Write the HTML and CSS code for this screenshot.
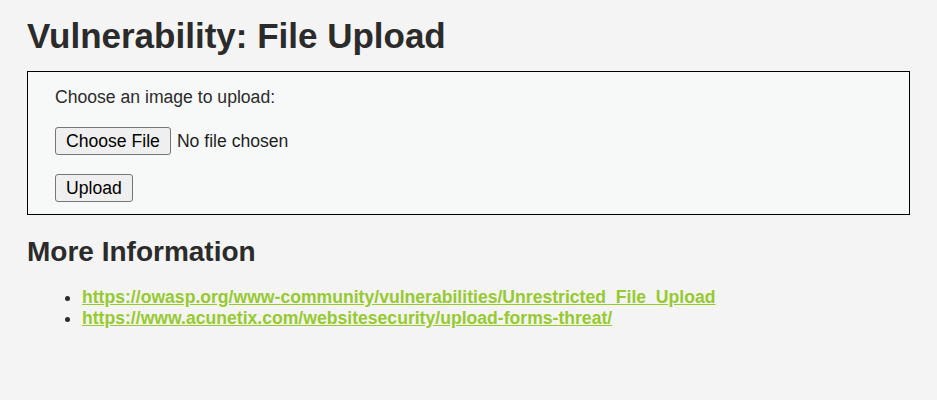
FILE: index.html
```html
<!DOCTYPE html>
<html lang="en">

<head>
    <meta charset="UTF-8">
    <meta name="viewport" content="width=device-width, initial-scale=1.0">
    <title>Vulnerability: File Upload</title>
    <link rel="stylesheet" href="styles.css">
</head>

<body>
    <div class="body-padded">
        <h1>Vulnerability: File Upload</h1>

        <div class="vulnerable-code-area">
            <form class="upload-form" enctype="multipart/form-data" method="POST" onsubmit="return false">
                <input type="hidden" name="MAX_FILE_SIZE" value="100000">
                <div class="form-row">Choose an image to upload:</div>
                <div class="form-row file-row">
                    <label class="btn" for="uploaded">Choose File</label>
                    <input class="file-input" id="uploaded" name="uploaded" type="file">
                    <span class="file-name">No file chosen</span>
                </div>
                <div class="form-row">
                    <button type="submit" class="btn" name="Upload">Upload</button>
                </div>
            </form>
        </div>

        <h2>More Information</h2>
        <ul class="info-links">
            <li><a href="#" target="_blank">https://owasp.org/www-community/vulnerabilities/Unrestricted_File_Upload</a></li>
            <li><a href="#" target="_blank">https://www.acunetix.com/websitesecurity/upload-forms-threat/</a></li>
        </ul>
    </div>
</body>

</html>
```

FILE: styles.css
```css
:root {
    --page-bg: #f4f4f4;
    --area-bg: #f7f8f8;
    --text-color: #2b2b2b;
    --link-color: #96ca2f;
    --btn-bg: #efefef;
    --btn-border: #767676;
}

* {
    box-sizing: border-box;
}

body {
    margin: 0;
    background-color: var(--page-bg);
    color: var(--text-color);
    font-family: "Liberation Sans", Arial, sans-serif;
    font-size: 17.6px;
}

.body-padded {
    padding: 0 27px;
}

h1 {
    font-size: 35px;
    font-weight: bold;
    margin: 16px 0 15px;
}

h2 {
    font-size: 28px;
    font-weight: bold;
    margin: 21px 0 19px;
}

.vulnerable-code-area {
    background-color: var(--area-bg);
    border: 1px solid #000;
    padding: 15px 27px 12px;
}

.upload-form {
    display: flex;
    flex-direction: column;
    align-items: flex-start;
    gap: 19px;
}

.file-row {
    display: flex;
    align-items: center;
    gap: 6px;
}

.file-input {
    display: none;
}

.file-name {
    color: #1f1f1f;
}

.btn {
    display: inline-block;
    font-family: inherit;
    font-size: 17.6px;
    line-height: 20px;
    color: #000;
    background-color: var(--btn-bg);
    border: 1px solid var(--btn-border);
    border-radius: 3px;
    padding: 3px 10px;
    cursor: pointer;
}

.btn:hover {
    background-color: #e5e5e5;
}

.info-links {
    margin: 0;
    padding-left: 55px;
}

.info-links a {
    color: var(--link-color);
    font-weight: bold;
}
```
